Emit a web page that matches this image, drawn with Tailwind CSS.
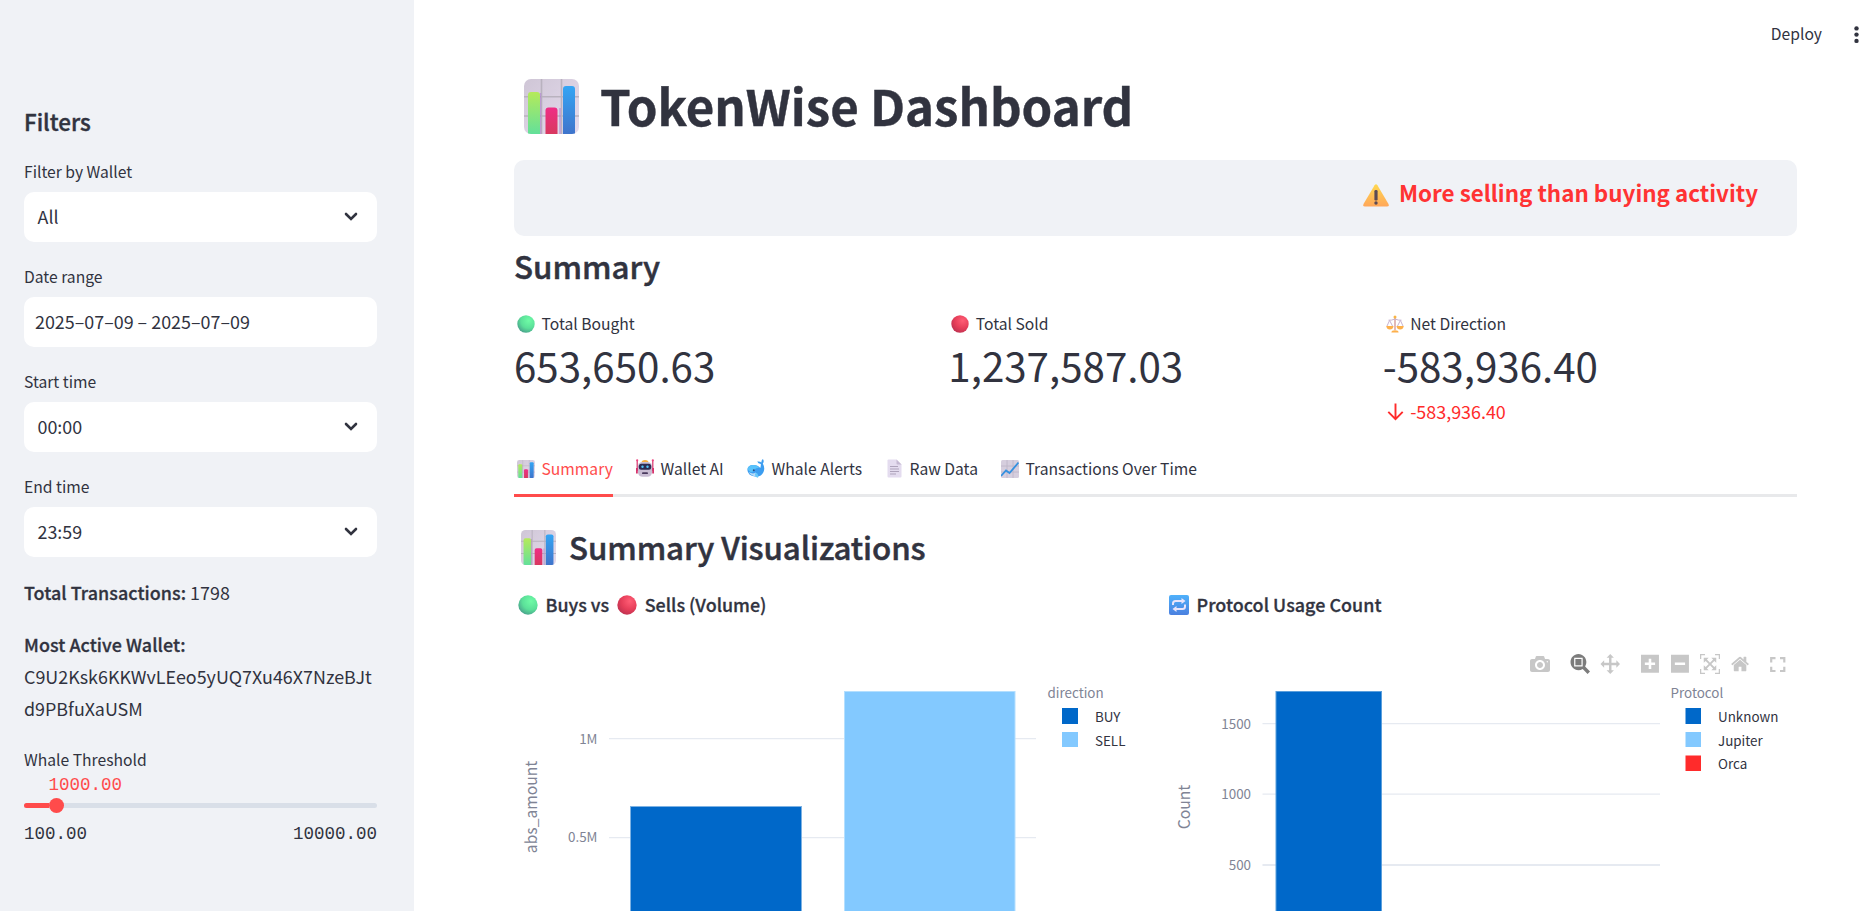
<!DOCTYPE html>
<html lang="en">
<head>
<meta charset="utf-8">
<title>TokenWise Dashboard</title>
<script src="https://cdn.jsdelivr.net/npm/@tailwindcss/browser@4"></script>
</head>
<body class="flex h-screen overflow-hidden bg-white font-['Noto_Sans_CJK_SC','Noto_Sans',sans-serif] text-[#31333f]">

<!-- shared icons -->
<svg width="0" height="0" class="absolute">
  <defs>
    <linearGradient id="paper" x1="0" y1="0" x2="1" y2="1"><stop offset="0" stop-color="#cfc6d6"/><stop offset="1" stop-color="#e6dcee"/></linearGradient>
    <linearGradient id="barG" x1="0" y1="0" x2="0" y2="1"><stop offset="0" stop-color="#b5ea5a"/><stop offset="1" stop-color="#63e09a"/></linearGradient>
    <linearGradient id="barR" x1="0" y1="0" x2="0" y2="1"><stop offset="0" stop-color="#ef2e86"/><stop offset="1" stop-color="#d8385f"/></linearGradient>
    <linearGradient id="barB" x1="0" y1="0" x2="0" y2="1"><stop offset="0" stop-color="#34a5f4"/><stop offset="1" stop-color="#3f74cb"/></linearGradient>
    <radialGradient id="green" cx=".65" cy=".3" r=".8"><stop offset="0" stop-color="#6ffba6"/><stop offset=".55" stop-color="#5be099"/><stop offset="1" stop-color="#47998a"/></radialGradient>
    <radialGradient id="red" cx=".65" cy=".3" r=".8"><stop offset="0" stop-color="#ff5d75"/><stop offset=".55" stop-color="#e63e59"/><stop offset="1" stop-color="#b9304f"/></radialGradient>
    <linearGradient id="amber" x1="0" y1="0" x2="0" y2="1"><stop offset="0" stop-color="#ffd84f"/><stop offset="1" stop-color="#ffa75a"/></linearGradient>
    <linearGradient id="blue" x1="0" y1="0" x2="0" y2="1"><stop offset="0" stop-color="#4fb1fb"/><stop offset="1" stop-color="#4b80df"/></linearGradient>
    <symbol id="chart" viewBox="0 0 55 55">
      <clipPath id="cc"><rect width="55" height="55" rx="7"/></clipPath>
      <g clip-path="url(#cc)">
        <rect width="55" height="55" fill="url(#paper)"/>
        <path d="M17.5 0V55M37.5 0V55M0 17.7H55M0 37H55" stroke="#b9b2bf" stroke-width="1.6"/>
        <path d="M16.5 14V55M36 29V55" stroke="#b07fd0" stroke-width="1.6" opacity=".6"/>
        <path d="M4 55V16q0-3 3-3h6q3 0 3 3V55z" fill="url(#barG)"/>
        <path d="M21.500 55V31.500q0-3 3-3h6q3 0 3 3V55z" fill="url(#barR)"/>
        <path d="M39 55V10q0-3 3-3h6q3 0 3 3V55z" fill="url(#barB)"/>
      </g>
    </symbol>
    <symbol id="chev" viewBox="0 0 14 10"><path d="M2 2l5 5 5-5" fill="none" stroke="#31333f" stroke-width="2.600" stroke-linecap="round" stroke-linejoin="miter"/></symbol>
  </defs>
</svg>

<aside class="h-full w-[414px] shrink-0 bg-[#f0f2f6] pl-6 pr-[37px] pt-[106px]">
  <h2 class="text-[22.4px] leading-[30px] font-medium [-webkit-text-stroke:0.4px_#31333f]">Filters</h2>
  <div class="mt-[22px] flex flex-col gap-[21px]">
    <div>
      <div class="h-[34px] text-[15.67px] leading-[28px]">Filter by Wallet</div>
      <div class="flex h-[50px] justify-between rounded-[10px] bg-white pl-[13.5px] pr-[19px] text-[17.9px] leading-[48px]"><span>All</span><svg class="mt-[20px] h-[10px] w-[14px]"><use href="#chev"/></svg></div>
    </div>
    <div>
      <div class="h-[34px] text-[15.67px] leading-[28px]">Date range</div>
      <div class="h-[50px] rounded-[10px] bg-white pl-[11px] text-[17.9px] leading-[48px]">2025–07–09 – 2025–07–09</div>
    </div>
    <div>
      <div class="h-[34px] text-[15.67px] leading-[28px]">Start time</div>
      <div class="flex h-[50px] justify-between rounded-[10px] bg-white pl-[13.5px] pr-[19px] text-[17.9px] leading-[48px]"><span>00:00</span><svg class="mt-[20px] h-[10px] w-[14px]"><use href="#chev"/></svg></div>
    </div>
    <div>
      <div class="h-[34px] text-[15.67px] leading-[28px]">End time</div>
      <div class="flex h-[50px] justify-between rounded-[10px] bg-white pl-[13.5px] pr-[19px] text-[17.9px] leading-[48px]"><span>23:59</span><svg class="mt-[20px] h-[10px] w-[14px]"><use href="#chev"/></svg></div>
    </div>
  </div>
  <p class="mt-[19px] text-[17.9px] leading-8"><span class="font-medium tracking-[0.06px] [-webkit-text-stroke:0.3px_#31333f]">Total Transactions:</span> 1798</p>
  <p class="mt-5 text-[17.9px] leading-8 whitespace-nowrap"><span class="font-medium tracking-[0.06px] [-webkit-text-stroke:0.3px_#31333f]">Most Active Wallet:</span><br>C9U2Ksk6KKWvLEeo5yUQ7Xu46X7NzeBJt<br>d9PBfuXaUSM</p>
  <div class="mt-[22px] text-[15.67px] leading-[28px]">Whale Threshold</div>
  <div class="mt-px pl-[24.500px] font-['Liberation_Mono',monospace] text-[17.5px] leading-5 text-[#ff4b4b]">1000.00</div>
  <div class="mt-2 flex h-[5px] items-center rounded-full bg-[#d9dfe8]">
    <div class="h-[5px] w-[25px] rounded-l-full bg-[#ff4b4b]"></div>
    <div class="-ml-[0.5px] size-[15px] shrink-0 rounded-full bg-[#ff4b4b]"></div>
  </div>
  <div class="mt-4 flex justify-between font-['Liberation_Mono',monospace] text-[17.5px] leading-5"><span>100.00</span><span>10000.00</span></div>
</aside>

<main class="flex h-full min-w-0 flex-1 flex-col pl-[100px] pr-[72px]">
  <header class="-mr-[72px] flex h-[75px] shrink-0 justify-end gap-[32px] pr-[10px] pt-[18px] text-[15.67px] leading-[32px]">
    <span>Deploy</span>
    <svg class="mt-[8px]" width="5" height="20" viewBox="0 0 5 20" fill="#31333f"><circle cx="2.500" cy="2.400" r="2.200"/><circle cx="2.500" cy="8.600" r="2.200"/><circle cx="2.500" cy="14.900" r="2.200"/></svg>
  </header>
  <h1 class="flex h-[60px] shrink-0 pl-[10px] text-[49.2px] leading-[60px] font-bold whitespace-nowrap [-webkit-text-stroke:0.4px_#31333f]"><svg class="mt-1 mr-[21px] size-[55px]"><use href="#chart"/></svg>TokenWise Dashboard</h1>
  <div class="mt-[25px] flex h-[76px] shrink-0 justify-end rounded-[10px] bg-[#f0f2f6] pr-[39px] text-[22.4px] leading-[65px] font-bold text-[#ff3333]">
    <svg class="mt-[24px] mr-[10px]" width="26" height="23" viewBox="0 0 26 23"><path d="M11.600 1.200q1.400-2 2.800 0L25.500 20q.9 2.500-1.500 2.500H2q-2.400 0-1.500-2.500z" fill="url(#amber)"/><rect x="11.400" y="6" width="3.200" height="10.500" rx="1.300" fill="#5b4a55"/><circle cx="13" cy="19" r="1.700" fill="#5b4a55"/></svg>
    <span>More selling than buying activity</span>
  </div>
  <h2 class="mt-[9px] text-[31.3px] leading-[42px] font-medium [-webkit-text-stroke:0.5px_#31333f]">Summary</h2>

  <section class="mt-[23px] grid h-[116px] shrink-0 grid-cols-3 gap-5">
    <div>
      <div class="flex items-start pl-[3px] text-[15.67px] leading-[28px]"><svg class="mt-[5px] mr-[6.5px] size-[18px]" viewBox="0 0 18 18"><circle cx="9" cy="9" r="8.700" fill="url(#green)"/></svg>Total Bought</div>
      <div class="text-[40.3px] leading-[54px]">653,650.63</div>
    </div>
    <div>
      <div class="flex items-start pl-[3px] text-[15.67px] leading-[28px]"><svg class="mt-[5px] mr-[6.5px] size-[18px]" viewBox="0 0 18 18"><circle cx="9" cy="9" r="8.700" fill="url(#red)"/></svg>Total Sold</div>
      <div class="text-[40.3px] leading-[54px]">1,237,587.03</div>
    </div>
    <div>
      <div class="flex items-start pl-[3px] text-[15.67px] leading-[28px]"><svg class="mt-[5px] mr-[6.5px] size-[18px]" viewBox="0 0 18 18"><path d="M9 2V15" stroke="#d9a2a0" stroke-width="1.500"/><path d="M2.500 5.200Q5.500 5.500 9 4q3.500 1.500 6.500 1.200M3.600 5.400L1 11M3.600 5.400L6.500 11M14.400 5.400L11.500 11M14.400 5.400L17 11" fill="none" stroke="#c7b2d0" stroke-width="1"/><path d="M.2 11H7.600Q7 14.600 3.900 14.600T.2 11zM10.400 11H17.800Q17.200 14.600 14.100 14.600T10.400 11zM5.400 17.600q0-2.400 3.600-2.400t3.600 2.400z" fill="#fdb04c"/><circle cx="9" cy="2" r="1.500" fill="#f9b443"/></svg>Net Direction</div>
      <div class="text-[40.3px] leading-[54px]">-583,936.40</div>
      <div class="mt-[4px] flex pl-[4px] text-[17.9px] leading-[30px] text-[#ff2b2b]"><svg class="mt-[7px] mr-[6.5px]" width="17" height="18" viewBox="0 0 17 18"><path d="M8.500 .5V16M1.300 8.800l7.200 7.400 7.200-7.400" fill="none" stroke="#ff2b2b" stroke-width="1.900"/></svg>-583,936.40</div>
    </div>
  </section>

  <nav class="mt-[29px] flex h-[42px] shrink-0 gap-5 border-b-[3px] border-[#e8e9eb] text-[15.67px] leading-[28px] whitespace-nowrap">
    <div class="flex h-[42px] w-[99px] border-b-[3px] border-[#ff4b4b] pl-[3px] text-[#ff4b4b]"><svg class="mt-[5px] mr-[6.5px] size-[18px] shrink-0"><use href="#chart"/></svg>Summary</div>
    <div class="flex w-[90px] pl-[3px]"><svg class="mt-[4px] mr-[6.5px] size-[18px] shrink-0" viewBox="0 0 18 18"><path d="M1.200 1V12M16.800 1V12" stroke="#d6336c" stroke-width="1.200"/><circle cx="1.200" cy="1.300" r="1.100" fill="#ef4480"/><circle cx="16.800" cy="1.300" r="1.100" fill="#ef4480"/><path d="M5.500 3.500q0-2.500 3.500-2.500t3.500 2.500z" fill="#fbb03f"/><rect x="2" y="3" width="14" height="14.700" rx="4.500" fill="#c9bdd3"/><rect x="2.800" y="4.800" width="12.400" height="6" rx="2.500" fill="#2f2b52"/><circle cx="6.500" cy="7.800" r="1.200" fill="#52c4f8"/><circle cx="11.500" cy="7.800" r="1.200" fill="#52c4f8"/><rect x="6" y="13.300" width="6" height="1.800" rx=".9" fill="#4a3a5e"/><path d="M0 9h1.800v5.500H0zM16.200 9h1.800v5.500h-1.800z" fill="#d6336c"/></svg>Wallet AI</div>
    <div class="flex w-[119px] pl-[4px]"><svg class="mt-[4px] mr-[5.5px] size-[19px] shrink-0" viewBox="0 0 19 19"><path d="M13.300 9Q14 6.500 13.800 5 11 4.500 10.200 2.500 13.300 2.200 14.300 3.500 14.300 1.300 15.800 0 17.600 2 15.800 4.600 18.300 9 16.500 13 14 18.500 8 17.500 .8 16.500 .4 11 .5 6 6.500 6q4.500 0 6.800 3z" fill="#3c9df0"/><path d="M.5 10Q1.500 6 6.500 6q4 0 5.500 3Q8 8.500 7 12q-4 3-6.500-2z" fill="#58c2fb"/><path d="M1.500 13Q6 15.500 8.500 13.500L11 17Q6 18.500 1.500 13z" fill="#b9dcf7"/><circle cx="6.800" cy="11.300" r="1" fill="#304a80"/><path d="M10 14q2 3 1 4.800Q7.500 18 8 14.500z" fill="#67c8fb"/></svg>Whale Alerts</div>
    <div class="flex w-[96px] pl-[5px]"><svg class="mt-[4px] mr-[7.5px] h-[19px] w-[15px] shrink-0" viewBox="0 0 15 19"><path d="M.5 1.500Q.5.500 1.500.500H9.500L14.500 5.500V17.500q0 1-1 1h-12q-1 0-1-1z" fill="#e4dcef"/><path d="M9.500.500L14.500 5.500H10.500q-1 0-1-1z" fill="#c5b9d2"/><path d="M3 7.500h8M3 10h9M3 12.500h9M3 15h6" stroke="#aea3bb" stroke-width="1"/></svg>Raw Data</div>
    <div class="flex pl-[3px]"><svg class="mt-[5px] mr-[6.5px] size-[18px] shrink-0" viewBox="0 0 18 18"><rect width="18" height="18" rx="1.500" fill="#d6cede"/><path d="M6 0V18M12 0V18M0 6H18M0 12H18" stroke="#bdb5c6" stroke-width=".8"/><path d="M0 16L5 10.500 8.500 13 17.500 2.500" fill="none" stroke="#3390e0" stroke-width="1.800"/></svg>Transactions Over Time</div>
  </nav>

  <h2 class="mt-[29px] flex h-[42px] shrink-0 pl-[6.5px] text-[31.3px] leading-[42px] font-medium tracking-[-0.1px] [-webkit-text-stroke:0.5px_#31333f]"><svg class="mt-[4px] mr-[13.5px] size-[35px]"><use href="#chart"/></svg>Summary Visualizations</h2>

  <section class="mt-[21px] grid shrink-0 grid-cols-2 gap-5">
    <div>
      <h3 class="flex pl-1 text-[17.9px] leading-[30px] font-medium [-webkit-text-stroke:0.3px_#31333f]"><svg class="mt-[6px] mr-[7.5px] size-5" viewBox="0 0 18 18"><circle cx="9" cy="9" r="8.700" fill="url(#green)" stroke="none"/></svg>Buys vs<svg class="mt-[6px] mr-2 ml-[7.5px] size-5" viewBox="0 0 18 18"><circle cx="9" cy="9" r="8.700" fill="url(#red)" stroke="none"/></svg>Sells (Volume)</h3>
      <svg class="mt-[21px] block font-['Noto_Sans_CJK_SC','Noto_Sans',sans-serif] text-[13.4px]" width="631" height="271" viewBox="514 640 631 271">
        <path d="M609 738.500H1036M609 837.500H1036" stroke="#e6eaf1" stroke-width="1.250"/>
        <rect x="630.500" y="806.500" width="171" height="120" fill="#0068c9" stroke="#7db2e3"/>
        <rect x="844.500" y="691.500" width="170.500" height="240" fill="#83c9ff" stroke="#b4dfff"/>
        <g fill="#808495">
          <text x="597.500" y="744" text-anchor="end">1M</text>
          <text x="597.500" y="842" text-anchor="end">0.5M</text>
          <text transform="translate(537 807) rotate(-90)" text-anchor="middle" font-size="15.670">abs_amount</text>
          <text x="1047.500" y="698">direction</text>
        </g>
        <rect x="1062" y="708" width="16" height="16" fill="#0068c9"/><rect x="1062" y="732" width="16" height="15" fill="#83c9ff"/>
        <g fill="#31333f"><text x="1095" y="722">BUY</text><text x="1095" y="746">SELL</text></g>
      </svg>
    </div>
    <div>
      <h3 class="flex pl-[3px] text-[17.9px] leading-[30px] font-medium tracking-[0.04px] [-webkit-text-stroke:0.3px_#31333f]"><svg class="mt-[6px] mr-2 size-5" viewBox="0 0 20 20"><rect width="20" height="20" rx="2" fill="url(#blue)" stroke="none"/><path d="M4 10V8.500q0-2.500 2.500-2.500H13M16 9.500V11.500q0 2.500-2.500 2.500H7" fill="none" stroke="#e9e4fb" stroke-width="2"/><path d="M12.500 3L16.500 6l-4 3zM7.500 11l-4 3 4 3z" fill="#e9e4fb"/></svg>Protocol Usage Count</h3>
      <svg class="mt-[21px] block font-['Noto_Sans_CJK_SC','Noto_Sans',sans-serif] text-[13.4px]" width="632" height="271" viewBox="1165.500 640 632 271">
        <path d="M1262 723.500H1659.500M1262 794H1659.500" stroke="#e6eaf1" stroke-width="1.250"/>
        <path d="M1262 865H1659.500" stroke="#e6eaf1" stroke-width="2"/>
        <rect x="1275.500" y="691.500" width="105.500" height="240" fill="#0068c9" stroke="#5b9fdc"/>
        <g fill="#808495">
          <text x="1250.500" y="728.500" text-anchor="end">1500</text>
          <text x="1250.500" y="799" text-anchor="end">1000</text>
          <text x="1250.500" y="870" text-anchor="end">500</text>
          <text transform="translate(1189.500 807) rotate(-90)" text-anchor="middle" font-size="15.670">Count</text>
          <text x="1670" y="698">Protocol</text>
        </g>
        <rect x="1685" y="708" width="15.500" height="16" fill="#0068c9"/><rect x="1685" y="732" width="15.500" height="15" fill="#83c9ff"/><rect x="1685" y="755.500" width="15.500" height="15.500" fill="#ff2b2b"/>
        <g fill="#31333f"><text x="1717.500" y="722">Unknown</text><text x="1717.500" y="746">Jupiter</text><text x="1717.500" y="769">Orca</text></g>
        <!-- chart toolbar -->
        <g fill="#c7c7c7">
          <path transform="translate(1529.500 671) scale(.02 -.02)" d="m500 450c-83 0-150-67-150-150 0-83 67-150 150-150 83 0 150 67 150 150 0 83-67 150-150 150z m400 150h-120c-16 0-34 13-39 29l-31 93c-6 15-23 28-40 28h-340c-16 0-34-13-39-28l-31-94c-6-15-23-28-40-28h-120c-55 0-100-45-100-100v-450c0-55 45-100 100-100h800c55 0 100 45 100 100v450c0 55-45 100-100 100z m-400-550c-138 0-250 112-250 250 0 138 112 250 250 250 138 0 250-112 250-250 0-138-112-250-250-250z m365 380c-19 0-35 16-35 35 0 19 16 35 35 35 19 0 35-16 35-35 0-19-16-35-35-35z"/>
          <path fill="#7c7c7c" transform="translate(1570 671) scale(.0195 -.02)" d="m1000-25l-250 251c40 63 63 138 63 218 0 224-182 406-407 406-224 0-406-182-406-406s183-406 407-406c80 0 155 22 218 62l250-250 125 125z m-812 250l0 438 437 0 0-438-437 0z m62 375l313 0 0-312-313 0 0 312z"/>
          <path transform="translate(1600 671) scale(.0195 -.02)" d="m1000 350l-187 188 0-125-250 0 0 250 125 0-188 187-187-187 125 0 0-250-250 0 0 125-188-188 186-187 0 125 252 0 0-250-125 0 187-188 188 188-125 0 0 250 250 0 0-126 187 188z"/>
          <path transform="translate(1640.500 671) scale(.0205 -.0205)" d="m1 787l0-875 875 0 0 875-875 0z m687-500l-187 0 0-187-125 0 0 187-188 0 0 125 188 0 0 187 125 0 0-187 187 0 0-125z"/>
          <path transform="translate(1670.500 671) scale(.0205 -.0205)" d="m0 788l0-876 875 0 0 876-875 0z m688-500l-500 0 0 125 500 0 0-125z"/>
          <path transform="translate(1699.500 671) scale(.02 -.02)" d="m250 850l-187 0-63 0 0-62 0-188 63 0 0 188 187 0 0 62z m688 0l-188 0 0-62 188 0 0-188 62 0 0 188 0 62-62 0z m-875-938l0 188-63 0 0-188 0-62 63 0 187 0 0 62-187 0z m875 188l0-188-188 0 0-62 188 0 62 0 0 62 0 188-62 0z m-125 188l-1 0-93-94-156 156 156 156 92-93 2 0 0 250-250 0 0-2 93-92-156-156-156 156 94 92 0 2-250 0 0-250 0 0 93 93 157-156-157-156-93 94 0 0 0-250 250 0 0 0-94 93 156 157 156-157-93-93 0 0 250 0 0 250z"/>
          <path transform="translate(1730.500 671) scale(.0195 -.02)" d="m786 296v-267q0-15-11-26t-25-10h-214v214h-143v-214h-214q-15 0-25 10t-11 26v267q0 1 0 2t0 2l321 264 321-264q1-1 1-4z m124 39l-34-41q-5-5-12-6h-2q-7 0-12 3l-386 322-386-322q-7-4-13-4-7 2-12 7l-35 41q-4 5-3 13t6 12l401 334q18 15 42 15t43-15l136-114v109q0 8 5 13t13 5h107q8 0 13-5t5-13v-227l122-102q5-5 6-12t-4-13z"/>
          <path fill="none" stroke="#c7c7c7" stroke-width="2.200" d="M1770.700 662.500V658.200H1775M1779.500 658.200H1783.800V662.500M1783.800 666.700V671H1779.500M1775 671H1770.700V666.700"/>
        </g>
      </svg>
    </div>
  </section>
</main>
</body>
</html>
